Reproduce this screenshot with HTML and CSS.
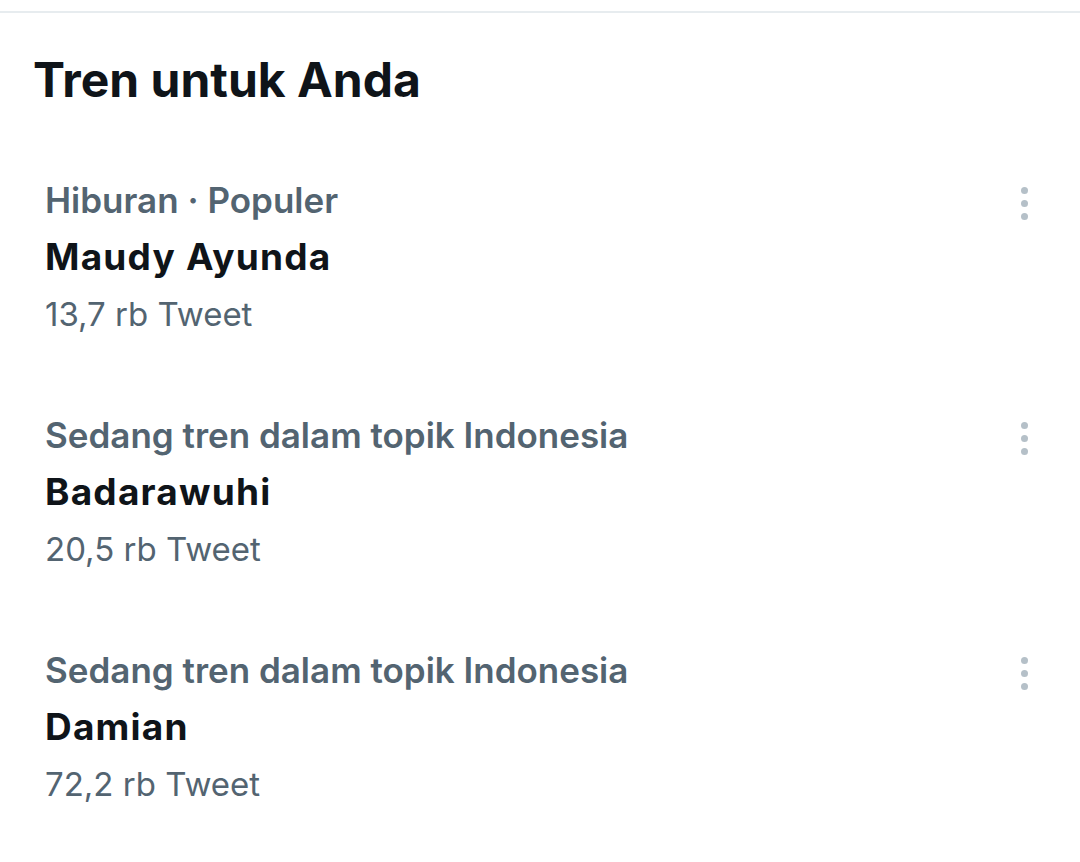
FILE: index.html
```html
<!DOCTYPE html>
<html lang="id">

<head>
    <meta charset="UTF-8">
    <meta name="viewport" content="width=device-width, initial-scale=1.0">
    <title>Tren untuk Anda</title>
    <link rel="stylesheet" href="styles.css">
</head>

<body>
    <div class="topline"></div>
    <div class="trends">
        <h2 class="title">Tren untuk Anda</h2>
        <ul class="list">
            <li class="item">
                <div class="info">
                    <p class="cat">Hiburan · Populer</p>
                    <p class="name">Maudy Ayunda</p>
                    <p class="count">13,7 rb Tweet</p>
                </div>
                <a href="#" class="more"><i></i><i></i><i></i></a>
            </li>
            <li class="item">
                <div class="info">
                    <p class="cat">Sedang tren dalam topik Indonesia</p>
                    <p class="name">Badarawuhi</p>
                    <p class="count">20,5 rb Tweet</p>
                </div>
                <a href="#" class="more"><i></i><i></i><i></i></a>
            </li>
            <li class="item">
                <div class="info">
                    <p class="cat">Sedang tren dalam topik Indonesia</p>
                    <p class="name">Damian</p>
                    <p class="count">72,2 rb Tweet</p>
                </div>
                <a href="#" class="more"><i></i><i></i><i></i></a>
            </li>
        </ul>
    </div>
</body>

</html>
```

FILE: styles.css
```css
/* reset */
* {
    margin: 0;
    padding: 0;
    box-sizing: border-box;
}

ul {
    list-style: none;
}

body {
    background-color: #fff;
    font-family: Inter, Roboto, "Noto Sans", Arial, sans-serif;
    color: #0f1419;
}

.topline {
    margin-top: 11px;
    height: 2px;
    background-color: #e7ecef;
}

.trends {
    padding-top: 39px;
}

.title {
    padding-left: 33px;
    font-size: 48px;
    line-height: 56px;
    font-weight: 700;
    color: #0f1419;
}

.list {
    padding-top: 72px;
}

.item {
    display: flex;
    justify-content: space-between;
    align-items: flex-start;
    padding: 0 52px 81px 45px;
}

.cat {
    font-size: 35px;
    line-height: 40px;
    font-weight: 600;
    color: #536471;
}

.name {
    margin-top: 9px;
    font-size: 37px;
    line-height: 56px;
    font-weight: 700;
    letter-spacing: 1.2px;
    color: #0f1419;
}

.count {
    margin-top: 9px;
    font-size: 33px;
    line-height: 40px;
    font-weight: 400;
    color: #536471;
}

.more {
    display: flex;
    flex-direction: column;
    gap: 6px;
    margin-top: 7px;
}

.more i {
    display: block;
    width: 7px;
    height: 7px;
    border-radius: 50%;
    background-color: #b5c0c8;
}
```
